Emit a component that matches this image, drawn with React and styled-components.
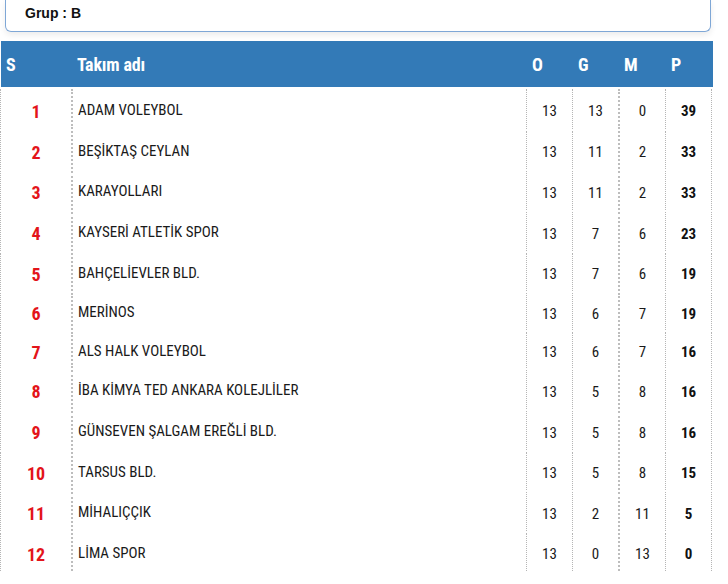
import React from 'react';
import styled, { createGlobalStyle } from 'styled-components';

const teams = [
  { name: 'ADAM VOLEYBOL', o: 13, g: 13, m: 0, p: 39, h: 42 },
  { name: 'BEŞİKTAŞ CEYLAN', o: 13, g: 11, m: 2, p: 33, h: 40 },
  { name: 'KARAYOLLARI', o: 13, g: 11, m: 2, p: 33, h: 41 },
  { name: 'KAYSERİ ATLETİK SPOR', o: 13, g: 7, m: 6, p: 23, h: 41 },
  { name: 'BAHÇELİEVLER BLD.', o: 13, g: 7, m: 6, p: 19, h: 40 },
  { name: 'MERİNOS', o: 13, g: 6, m: 7, p: 19, h: 39 },
  { name: 'ALS HALK VOLEYBOL', o: 13, g: 6, m: 7, p: 16, h: 38 },
  { name: 'İBA KİMYA TED ANKARA KOLEJLİLER', o: 13, g: 5, m: 8, p: 16, h: 41 },
  { name: 'GÜNSEVEN ŞALGAM EREĞLİ BLD.', o: 13, g: 5, m: 8, p: 16, h: 41 },
  { name: 'TARSUS BLD.', o: 13, g: 5, m: 8, p: 15, h: 40 },
  { name: 'MİHALIÇÇIK', o: 13, g: 2, m: 11, p: 5, h: 41 },
  { name: 'LİMA SPOR', o: 13, g: 0, m: 13, p: 0, h: 40 },
];

const cols = '71px 455px 46px 46px 47px 47px';

export default () => <Page>
  <GlobalStyle/>
  <GroupBox>Grup : B</GroupBox>
  <Table>
    <HeadRow>
      <HeadCell>S</HeadCell>
      <HeadCell>Takım adı</HeadCell>
      <HeadCell>O</HeadCell>
      <HeadCell>G</HeadCell>
      <HeadCell>M</HeadCell>
      <HeadCell>P</HeadCell>
    </HeadRow>
    {teams.map((team, i) => <Row key={team.name} height={team.h}>
      <RankCell>{i + 1}</RankCell>
      <NameCell>{team.name}</NameCell>
      <StatCell>{team.o}</StatCell>
      <StatCell>{team.g}</StatCell>
      <StatCell thick>{team.m}</StatCell>
      <StatCell bold last>{team.p}</StatCell>
    </Row>)}
  </Table>
</Page>;

const GlobalStyle = createGlobalStyle`
    body {
        margin: 0;
        background: #fff;
    }
`;

const Page = styled.div`
    width: 728px;
    height: 584px;
    overflow: hidden;
`;

const GroupBox = styled.div`
    box-sizing: border-box;
    margin-left: 5px;
    width: 706px;
    height: 32px;
    padding: 5px 0 0 19px;
    border: 1px solid #7fa7d6;
    border-top: none;
    border-radius: 0 0 6px 6px;
    box-shadow: 0 3px 6px rgba(0, 0, 0, 0.08);
    font-family: "Liberation Sans", Arial, sans-serif;
    font-weight: bold;
    font-size: 14px;
    color: #111;
`;

const Table = styled.div`
    margin-top: 9px;
    width: 713px;
`;

const HeadRow = styled.div`
    display: grid;
    grid-template-columns: ${cols};
    height: 46px;
    margin-left: 1px;
    background: #337ab7;
    align-items: center;
`;

const HeadCell = styled.div`
    padding-left: 5px;
    color: #fff;
    font-family: "Roboto Condensed", Roboto, sans-serif;
    font-stretch: 75%;
    font-weight: bold;
    font-size: 18px;
    letter-spacing: -0.2px;
`;

const Row = styled.div`
    box-sizing: border-box;
    display: grid;
    grid-template-columns: ${cols};
    height: ${props => props.height}px;
    padding-top: 2px;
`;

const Cell = styled.div`
    display: flex;
    align-items: center;
    border-left: 1px dotted #b5b5b5;
    font-family: "Roboto Condensed", Roboto, sans-serif;
    font-stretch: 75%;
    font-size: 15px;
    color: #1a1a1a;
`;

const RankCell = styled(Cell)`
    justify-content: center;
    padding-top: 4px;
    color: #e3141a;
    font-weight: bold;
    font-size: 18px;
`;

const NameCell = styled(Cell)`
    padding-left: 5px;
    padding-top: 1px;
    border-left: 2px dotted #bdbdbd;
`;

const StatCell = styled(Cell)`
    justify-content: center;
    padding-top: 4px;
    font-weight: ${props => props.bold ? 'bold' : 'normal'};
    color: ${props => props.bold ? '#111' : '#1a1a1a'};
    border-left: ${props => props.thick ? '2px dotted #bdbdbd' : '1px dotted #b5b5b5'};
    border-right: ${props => props.last ? '1px dotted #b5b5b5' : 'none'};
`;
